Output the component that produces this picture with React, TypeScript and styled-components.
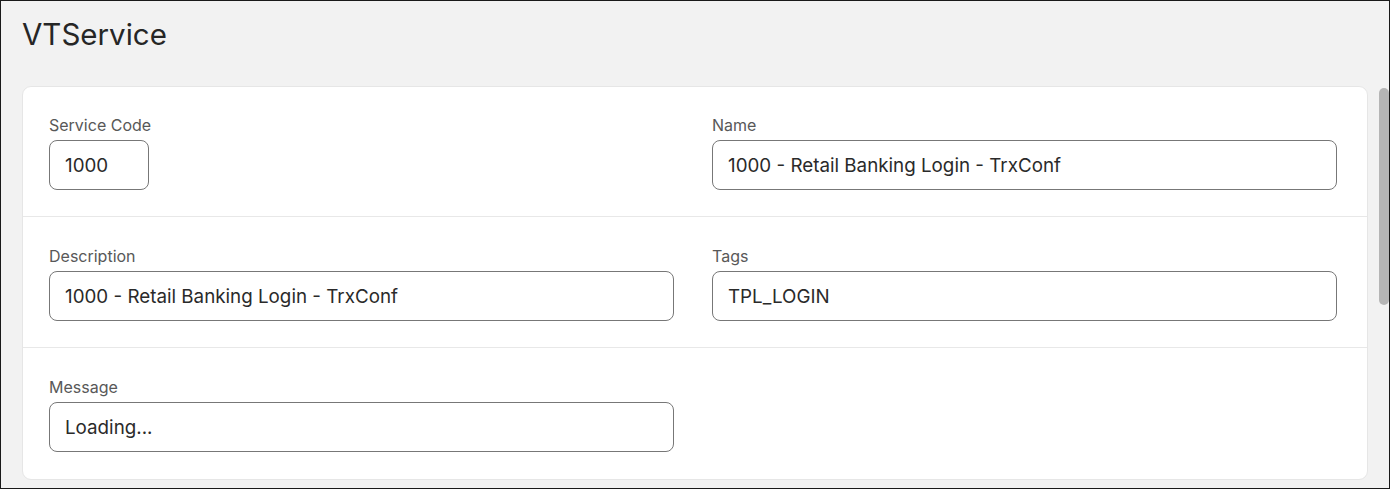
import styled, { createGlobalStyle } from "styled-components";

const GlobalStyle = createGlobalStyle`
  html, body {
    margin: 0;
    padding: 0;
    height: 100%;
  }
  body {
    font-family: Inter, "Noto Sans", sans-serif;
    color: #222;
  }
  * {
    box-sizing: border-box;
  }
`;

const Frame = styled.div`
  display: flex;
  flex-direction: column;
  height: 100vh;
  border: 1px solid #1a1a1a;
  background-color: #f2f2f2;
  overflow: hidden;
`;

const Title = styled.h1`
  margin: 0;
  padding: 15px 21px 0;
  font-size: 29.5px;
  font-weight: 400;
  line-height: 36px;
  color: #262626;
`;

const Body = styled.div`
  flex: 1;
  display: flex;
  margin-top: 34px;
  min-height: 0;
`;

const Content = styled.div`
  flex: 1;
  min-width: 0;
  padding-left: 21px;
  overflow: hidden;
`;

// drawn scrollbar, the headless browser hides native ones
const Track = styled.div`
  width: 21px;
  flex-shrink: 0;
  padding: 2px 0 0 11px;
`;

const Thumb = styled.div`
  width: 10px;
  height: 217px;
  border-radius: 5px;
  background-color: #b5b5b5;
`;

const Card = styled.section`
  background-color: #fff;
  border: 1px solid #e6e6e6;
  border-radius: 9px;
  overflow: hidden;
`;

const Row = styled.div`
  display: grid;
  grid-template-columns: 1fr 1fr;
  column-gap: 38px;
  padding: 29px 30px 0 26px;
  height: 129px;

  & + & {
    height: 131px;
    padding-top: 30px;
    border-top: 1px solid #e8e8e8;
  }

  &:last-child {
    height: 132px;
  }
`;

const Field = styled.div`
  display: flex;
  flex-direction: column;
  align-items: flex-start;
`;

const Label = styled.label`
  font-size: 16px;
  line-height: 19px;
  color: #585858;
  margin-bottom: 5px;
`;

const Input = styled.div<{ $narrow?: boolean }>`
  width: ${(p) => (p.$narrow ? "100px" : "100%")};
  height: 50px;
  display: flex;
  align-items: center;
  padding: 0 15px;
  border: 1px solid #777;
  border-radius: 8px;
  font-size: 18.8px;
  color: #2a2a2a;
  white-space: nowrap;
  overflow: hidden;
`;

interface FieldData {
  label: string;
  value: string;
  narrow?: boolean;
}

const rows: (FieldData | null)[][] = [
  [
    { label: "Service Code", value: "1000", narrow: true },
    { label: "Name", value: "1000 - Retail Banking Login - TrxConf" },
  ],
  [
    { label: "Description", value: "1000 - Retail Banking Login - TrxConf" },
    { label: "Tags", value: "TPL_LOGIN" },
  ],
  [{ label: "Message", value: "Loading..." }, null],
];

const App = () => {
  return (
    <>
      <GlobalStyle />
      <Frame>
        <Title>VTService</Title>
        <Body>
          <Content>
            <Card>
              {rows.map((row, i) => (
                <Row key={i}>
                  {row.map((f, j) =>
                    f ? (
                      <Field key={j}>
                        <Label>{f.label}</Label>
                        <Input $narrow={f.narrow}>{f.value}</Input>
                      </Field>
                    ) : (
                      <div key={j} />
                    )
                  )}
                </Row>
              ))}
            </Card>
          </Content>
          <Track>
            <Thumb />
          </Track>
        </Body>
      </Frame>
    </>
  );
};

export default App;
